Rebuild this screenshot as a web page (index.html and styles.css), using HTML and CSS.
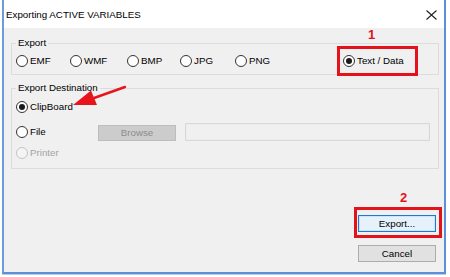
FILE: index.html
```html
<!DOCTYPE html>
<html>
<head>
<meta charset="utf-8">
<link rel="stylesheet" href="styles.css">
</head>
<body>
<div class="window">
  <div class="titlebar">
    <span class="title">Exporting ACTIVE VARIABLES</span>
    <svg class="close" width="11" height="10" viewBox="0 0 11 10"><path d="M0.5 0.5 L10.5 9.5 M10.5 0.5 L0.5 9.5" stroke="#222" stroke-width="1.1" fill="none"/></svg>
  </div>
  <div class="content">
    <fieldset class="group g-export">
      <legend>Export</legend>
      <div class="radio-row">
        <label class="radio w-emf"><span class="dot"></span>EMF</label>
        <label class="radio w-wmf"><span class="dot"></span>WMF</label>
        <label class="radio w-bmp"><span class="dot"></span>BMP</label>
        <label class="radio w-jpg"><span class="dot"></span>JPG</label>
        <label class="radio w-png"><span class="dot"></span>PNG</label>
        <label class="radio checked"><span class="dot"></span>Text / Data</label>
      </div>
    </fieldset>
    <fieldset class="group g-dest">
      <legend>Export Destination</legend>
      <div class="row-clip"><label class="radio checked"><span class="dot"></span>ClipBoard</label></div>
      <div class="row-file">
        <label class="radio"><span class="dot"></span>File</label>
        <div class="browse">Browse</div>
        <div class="field"></div>
      </div>
      <div class="row-printer"><label class="radio disabled"><span class="dot"></span>Printer</label></div>
    </fieldset>
    <div class="actions">
      <div class="btn primary">Export...</div>
      <div class="btn">Cancel</div>
    </div>
  </div>
</div>

<div class="annot num n1">1</div>
<div class="annot box b1"></div>
<div class="annot num n2">2</div>
<div class="annot box b2"></div>
<svg class="annot arrow" width="450" height="277" viewBox="0 0 450 277">
  <path d="M125 87 L94 98" stroke="#e8141b" stroke-width="2.4" fill="none" stroke-linecap="round"/>
  <polygon points="73,105 91,90.5 97,105" fill="#e8141b"/>
</svg>
</body>
</html>
```
FILE: styles.css
```css
html, body {
  margin: 0;
  padding: 0;
  background: #ffffff;
}
body {
  position: relative;
  width: 450px;
  height: 277px;
  overflow: hidden;
  font-family: "Liberation Sans", Arial, sans-serif;
  font-size: 9.75px;
  line-height: 12px;
  color: #000;
}
.window {
  margin-left: 2px;
  width: 440px;
  height: 272px;
  border-left: 2px solid #6e9bdc;
  border-right: 2px solid #5d8fd6;
  border-bottom: 2px solid #5d8fd6;
  box-shadow: 0 1px 0 #b9cfee;
  background: #f0f0f0;
  display: flex;
  flex-direction: column;
}
.titlebar {
  height: 28px;
  background: #ffffff;
  display: flex;
  align-items: flex-start;
  justify-content: space-between;
  padding: 9px 7px 0 2px;
  box-sizing: border-box;
  flex: none;
}
.title {
  font-size: 9.75px;
  line-height: 12px;
}
.close {
  margin-top: 1px;
  display: block;
}
.content {
  flex: 1;
  display: flex;
  flex-direction: column;
}
.group {
  border: 1px solid #dcdcdc;
  min-width: 0;
  margin: 0 5px 0 7px;
}
.group legend {
  padding: 0 2px;
  line-height: 12px;
}
.g-export {
  margin-top: 9px;
  padding: 6px 4px 7px 4px;
}
.g-dest {
  margin-top: 7px;
  padding: 7px 8px 9px 4px;
}
.radio-row {
  display: flex;
  height: 12px;
}
.radio {
  display: flex;
  align-items: center;
  gap: 2px;
  height: 12px;
  white-space: nowrap;
}
.w-emf { width: 54px; }
.w-wmf { width: 57px; }
.w-bmp { width: 53px; }
.w-jpg { width: 55px; }
.w-png { width: 108px; }
.dot {
  width: 10px;
  height: 10px;
  border: 1px solid #333;
  border-radius: 50%;
  background: #fff;
  flex: none;
  display: flex;
  align-items: center;
  justify-content: center;
}
.checked .dot::after {
  content: "";
  width: 6px;
  height: 6px;
  border-radius: 50%;
  background: #1a1a1a;
}
.disabled {
  color: #a3a3a3;
}
.disabled .dot {
  border-color: #c4c4c4;
  background: #f4f4f4;
}
.row-clip {
  height: 12px;
}
.row-file {
  margin-top: 10px;
  height: 18px;
  display: flex;
  align-items: center;
}
.row-file .radio {
  width: 82px;
  margin-top: -1px;
}
.browse {
  width: 78px;
  height: 16px;
  box-sizing: border-box;
  background: #cccccc;
  border: 1px solid #bdbdbd;
  color: #8c8c8c;
  text-align: center;
  line-height: 14px;
  align-self: flex-end;
  flex: none;
}
.field {
  flex: 1;
  margin-left: 9px;
  height: 18px;
  box-sizing: border-box;
  border: 1px solid #d8d8d8;
  box-shadow: inset 0 0 0 1px #ececec;
  background: #f0f0f0;
}
.row-printer {
  margin-top: 6px;
  height: 12px;
}
.actions {
  margin-top: 46px;
  margin-right: 8px;
  display: flex;
  flex-direction: column;
  align-items: flex-end;
  gap: 13px;
}
.btn {
  width: 78px;
  height: 17px;
  box-sizing: border-box;
  border: 1px solid #adadad;
  background: #e1e1e1;
  text-align: center;
  line-height: 15px;
}
.btn.primary {
  border-color: #1a7ad4;
  background: #e5f1fb;
  box-shadow: inset 0 0 0 1px #cfe4f7;
}
.annot {
  position: absolute;
  pointer-events: none;
}
.box {
  border: 3px solid #e3121b;
  box-sizing: border-box;
}
.b1 { left: 337px; top: 46px; width: 81px; height: 30px; }
.b2 { left: 354px; top: 207px; width: 88px; height: 31px; }
.num {
  color: #e3121b;
  font-weight: bold;
  font-size: 13px;
  line-height: 14px;
  font-family: "Liberation Sans", Arial, sans-serif;
}
.n1 { left: 368px; top: 28px; }
.n2 { left: 400px; top: 191px; }
.arrow { left: 0; top: 0; }
```
